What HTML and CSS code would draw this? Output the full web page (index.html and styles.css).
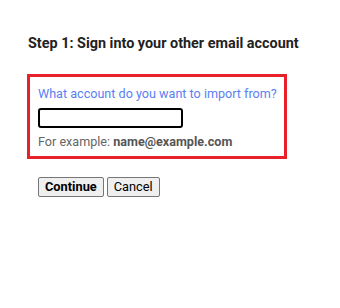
FILE: index.html
```html
<!DOCTYPE html>
<html>
<head>
<meta charset="utf-8">
<link rel="stylesheet" href="styles.css">
</head>
<body>
<div class="page">
  <h1 class="title">Step 1: Sign into your other email account</h1>
  <div class="box">
    <label class="question" for="acct">What account do you want to import from?</label>
    <input class="field" id="acct" type="text">
    <div class="hint">For example: <b>name@example.com</b></div>
  </div>
  <div class="actions">
    <button class="btn btn-primary">Continue</button>
    <button class="btn">Cancel</button>
  </div>
</div>
</body>
</html>
```
FILE: styles.css
```css
html, body {
  margin: 0;
  padding: 0;
  background: #fff;
}
.page {
  padding: 36px 0 0 27px;
  font-family: Roboto, "Liberation Sans", sans-serif;
}
.title {
  margin: 0 0 0 1px;
  font-size: 14.4px;
  line-height: 16px;
  font-weight: bold;
  color: #222;
}
.box {
  margin-top: 22px;
  width: 246px;
  border: 3px solid #e8202a;
  padding: 9px 0 6px 8px;
  display: flex;
  flex-direction: column;
  align-items: flex-start;
}
.question {
  font-size: 12.6px;
  line-height: 16px;
  color: #5a7ff5;
}
.field {
  margin: 6px 0 0 0;
  width: 141px;
  height: 16px;
  padding: 0;
  border: 2px solid #000;
  border-radius: 3px;
  outline: none;
  box-sizing: content-box;
}
.hint {
  margin-top: 6px;
  font-size: 12.6px;
  line-height: 16px;
  color: #666;
}
.hint b {
  color: #555;
}
.actions {
  margin: 18px 0 0 11px;
  display: flex;
  gap: 3px;
}
.btn {
  font-family: Roboto, "Liberation Sans", sans-serif;
  font-size: 12.8px;
  line-height: 16px;
  padding: 1px 6px;
  background: #efefef;
  border: 1px solid #767676;
  border-radius: 2px;
  color: #000;
}
.btn-primary {
  font-weight: bold;
}
```
